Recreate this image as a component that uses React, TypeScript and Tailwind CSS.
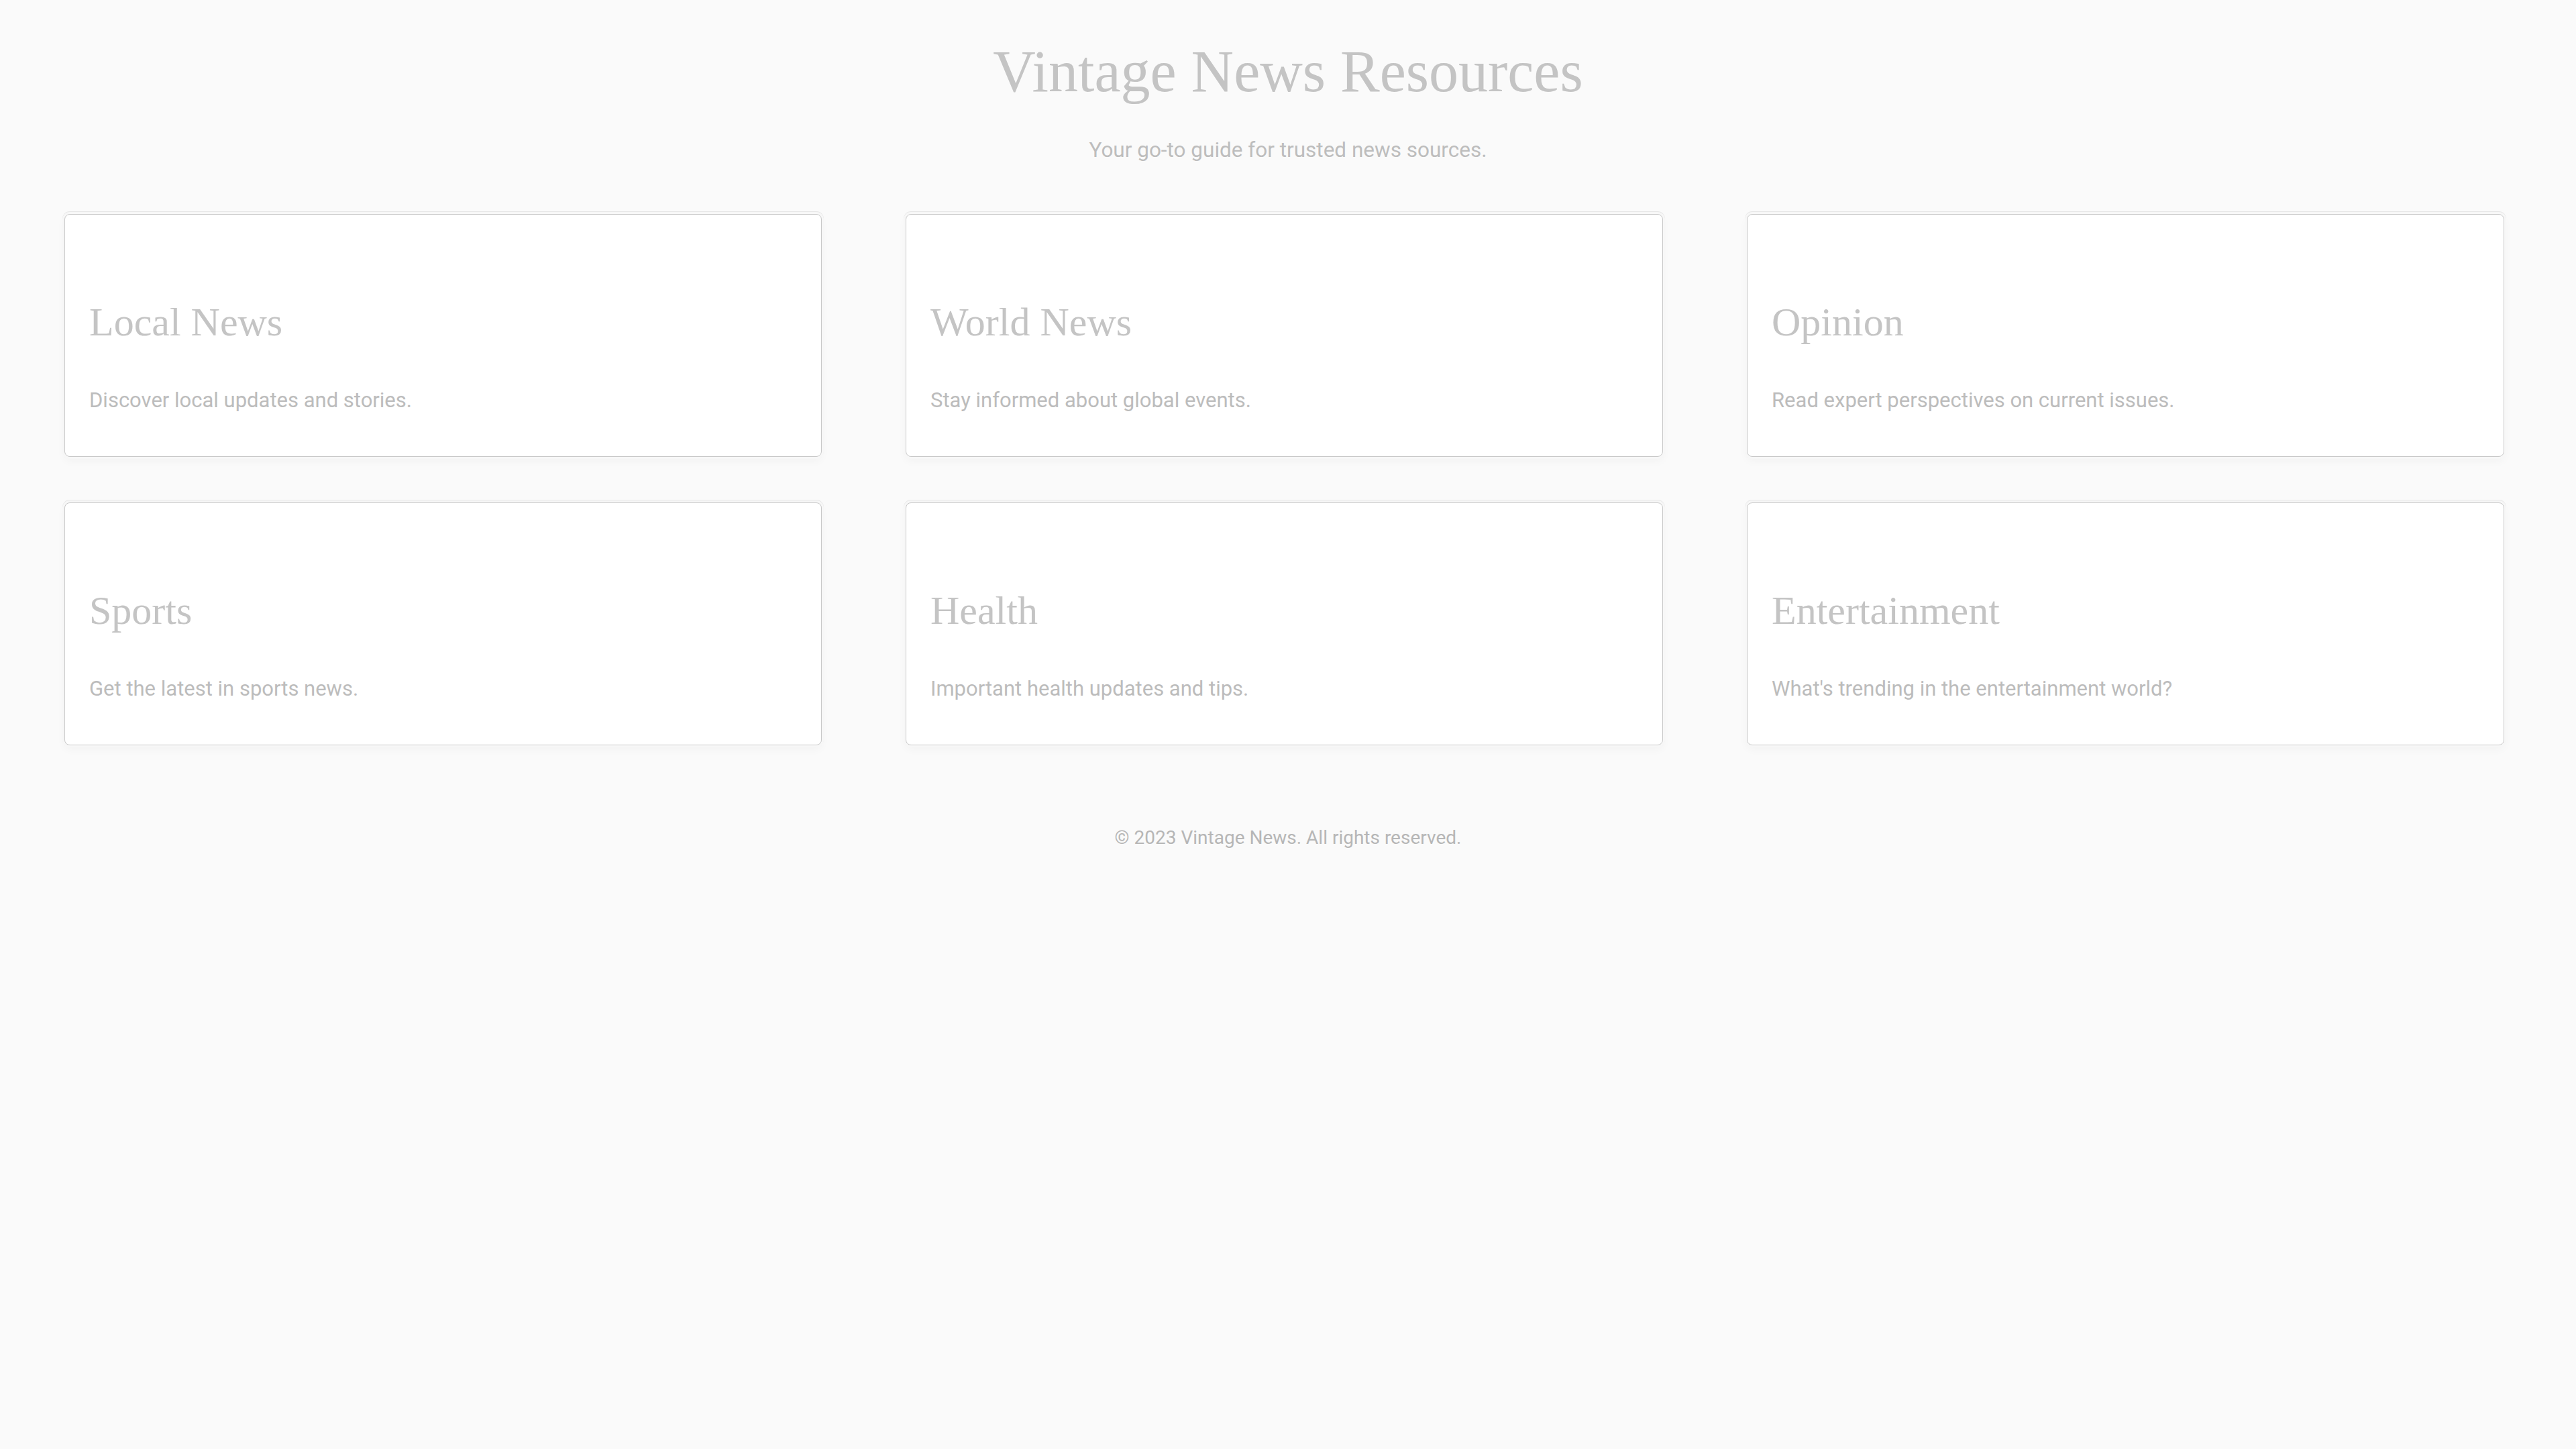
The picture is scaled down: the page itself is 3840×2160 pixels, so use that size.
const sections = [
  { title: 'Local News', text: 'Discover local updates and stories.' },
  { title: 'World News', text: 'Stay informed about global events.' },
  { title: 'Opinion', text: 'Read expert perspectives on current issues.' },
  { title: 'Sports', text: 'Get the latest in sports news.' },
  { title: 'Health', text: 'Important health updates and tips.' },
  { title: 'Entertainment', text: "What's trending in the entertainment world?" },
];

function SectionCard({ title, text }: { title: string; text: string }) {
  return (
    <div className="flex flex-col rounded-lg border border-[#c9c9c9] bg-white px-[36px] pb-[59px] pt-[124px] shadow-[0_0_0_3px_#f7f7f7,0_-1px_0_3px_#e6e6e6,0_6px_14px_rgba(0,0,0,0.035)]">
      <h2 className="font-['Liberation_Serif',serif] text-[60px] leading-[72px] text-[#c4c4c4]">{title}</h2>
      <p className="mt-[57px] font-['Roboto',sans-serif] text-[31px] leading-[48px] text-[#bcbcbc]">{text}</p>
    </div>
  );
}

export default function App() {
  return (
    <div className="min-h-screen bg-[#fafafa] font-['Roboto',sans-serif]">
      <header className="flex flex-col items-center pt-[54px]">
        <h1 className="font-['Liberation_Serif',serif] text-[88px] leading-[1.2] text-[#c4c4c4]">
          Vintage News Resources
        </h1>
        <p className="mt-[40px] text-[31.5px] leading-[48px] text-[#bdbdbd]">
          Your go-to guide for trusted news sources.
        </p>
      </header>

      <main className="mt-[71px] grid grid-cols-3 gap-x-[125px] gap-y-[68px] pl-[96px] pr-[107px]">
        {sections.map((s) => (
          <SectionCard key={s.title} title={s.title} text={s.text} />
        ))}
      </main>

      <footer className="mt-[117px] text-center text-[28px] leading-[42px] text-[#b6b6b6]">
        © 2023 Vintage News. All rights reserved.
      </footer>
    </div>
  );
}
